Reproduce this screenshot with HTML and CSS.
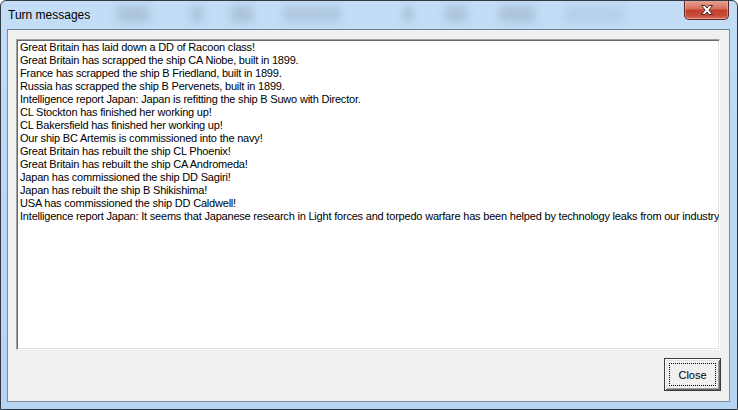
FILE: index.html
```html
<!DOCTYPE html>
<html>
<head>
<meta charset="utf-8">
<title>Turn messages</title>
<link rel="stylesheet" href="styles.css">
</head>
<body>
<div class="window">
  <div class="titlebar">
    <span class="title">Turn messages</span>
    <div class="ghosts">
      <span class="ghost g1"></span>
      <span class="ghost g2"></span>
      <span class="ghost g3"></span>
      <span class="ghost g4"></span>
      <span class="ghost g5"></span>
      <span class="ghost g6"></span>
      <span class="ghost g7"></span>
      <span class="ghost g8"></span>
    </div>
    <button class="close-x" aria-label="Close window">
      <svg width="16" height="12" viewBox="0 0 16 12">
        <path d="M2.5 1.5 L6 1.5 L8 4 L10 1.5 L13.5 1.5 L10 6 L13.5 10.5 L10 10.5 L8 8 L6 10.5 L2.5 10.5 L6 6 Z" fill="#ffffff" stroke="#4a2a26" stroke-width="1" stroke-linejoin="round"/>
      </svg>
    </button>
  </div>
  <div class="client">
    <div class="listbox">
      <div class="line">Great Britain has laid down a DD of Racoon class!</div>
      <div class="line">Great Britain has scrapped the ship CA Niobe, built in 1899.</div>
      <div class="line">France has scrapped the ship B Friedland, built in 1899.</div>
      <div class="line">Russia has scrapped the ship B Pervenets, built in 1899.</div>
      <div class="line">Intelligence report Japan: Japan is refitting the ship B Suwo with Director.</div>
      <div class="line">CL Stockton has finished her working up!</div>
      <div class="line">CL Bakersfield has finished her working up!</div>
      <div class="line">Our ship BC Artemis is commissioned into the navy!</div>
      <div class="line">Great Britain has rebuilt the ship CL Phoenix!</div>
      <div class="line">Great Britain has rebuilt the ship CA Andromeda!</div>
      <div class="line">Japan has commissioned the ship DD Sagiri!</div>
      <div class="line">Japan has rebuilt the ship B Shikishima!</div>
      <div class="line">USA has commissioned the ship DD Caldwell!</div>
      <div class="line">Intelligence report Japan: It seems that Japanese research in Light forces and torpedo warfare has been helped by technology leaks from our industry.</div>
    </div>
    <div class="footer">
      <button class="btn"><span class="focus">Close</span></button>
    </div>
  </div>
</div>
</body>
</html>
```
FILE: styles.css
```css
html, body {
  margin: 0;
  padding: 0;
  background: #ffffff;
}
body {
  width: 738px;
  height: 410px;
  overflow: hidden;
  font-family: "Liberation Sans", Arial, sans-serif;
}
.window {
  box-sizing: border-box;
  width: 738px;
  height: 410px;
  border: 1px solid #2f3a44;
  border-radius: 6px 6px 0 0;
  background: linear-gradient(180deg, #c3ddf6 0%, #bcd8f4 40%, #b6d4f1 100%);
  display: flex;
  flex-direction: column;
  overflow: hidden;
}
.titlebar {
  height: 28px;
  flex: none;
  display: flex;
  align-items: flex-start;
  position: relative;
}
.title {
  font-size: 12px;
  color: #000000;
  padding: 7px 0 0 7px;
  line-height: 14px;
  width: 100px;
  flex: none;
}
.ghosts {
  flex: 1;
  display: flex;
  align-items: flex-start;
  padding-top: 5px;
  opacity: 0.35;
}
.ghost {
  display: block;
  height: 16px;
  background: #7f95ab;
  filter: blur(4px);
  flex: none;
}
.g1 { margin-left: 9px; width: 32px; }
.g2 { margin-left: 42px; width: 12px; }
.g3 { margin-left: 28px; width: 22px; }
.g4 { margin-left: 30px; width: 58px; opacity: 0.8; }
.g5 { margin-left: 62px; width: 10px; }
.g6 { margin-left: 32px; width: 22px; }
.g7 { margin-left: 32px; width: 36px; }
.g8 { margin-left: 30px; width: 60px; opacity: 0.5; }
.close-x {
  position: absolute;
  top: -1px;
  right: 8px;
  width: 45px;
  height: 20px;
  padding: 0;
  border: 1px solid #5b2a23;
  border-top: none;
  border-radius: 0 0 5px 5px;
  background: linear-gradient(180deg, #e9a99a 0%, #d7705c 45%, #c2412c 55%, #c84d36 85%, #d98571 100%);
  box-shadow: inset 0 0 0 1px rgba(255, 200, 190, 0.45);
  display: flex;
  align-items: center;
  justify-content: center;
}
.client {
  flex: 1;
  margin: 0 7px 7px 6px;
  border: 1px solid #7a8ea3;
  border-top-color: #6e8296;
  background: #f0f0f0;
  display: flex;
  flex-direction: column;
  padding: 9px 9px 10px 8px;
  box-sizing: border-box;
}
.listbox {
  flex: none;
  height: 311px;
  box-sizing: border-box;
  background: #ffffff;
  border-top: 1px solid #a0a0a0;
  border-left: 1px solid #a0a0a0;
  border-right: 1px solid #ffffff;
  border-bottom: 1px solid #ffffff;
  box-shadow: inset 1px 1px 0 #696969, inset -1px -1px 0 #e3e3e3;
  padding: 1px 2px 0 3px;
  overflow: hidden;
}
.line {
  font-size: 11px;
  line-height: 13px;
  height: 13px;
  letter-spacing: -0.2px;
  color: #000000;
  white-space: nowrap;
}
.footer {
  flex: 1;
  display: flex;
  justify-content: flex-end;
  align-items: flex-start;
  padding-top: 8px;
}
.btn {
  width: 57px;
  height: 33px;
  box-sizing: border-box;
  border: 1px solid #3c3c3c;
  background: #f0f0f0;
  box-shadow: inset 1px 1px 0 #ffffff, inset -1px -1px 0 #696969, inset 2px 2px 0 #e3e3e3, inset -2px -2px 0 #a0a0a0;
  padding: 4px;
  margin-right: -1px;
  display: flex;
}
.focus {
  flex: 1;
  border: 1px dotted #000000;
  font-family: "Liberation Sans", Arial, sans-serif;
  font-size: 11px;
  color: #000000;
  display: flex;
  align-items: center;
  justify-content: center;
}
```
